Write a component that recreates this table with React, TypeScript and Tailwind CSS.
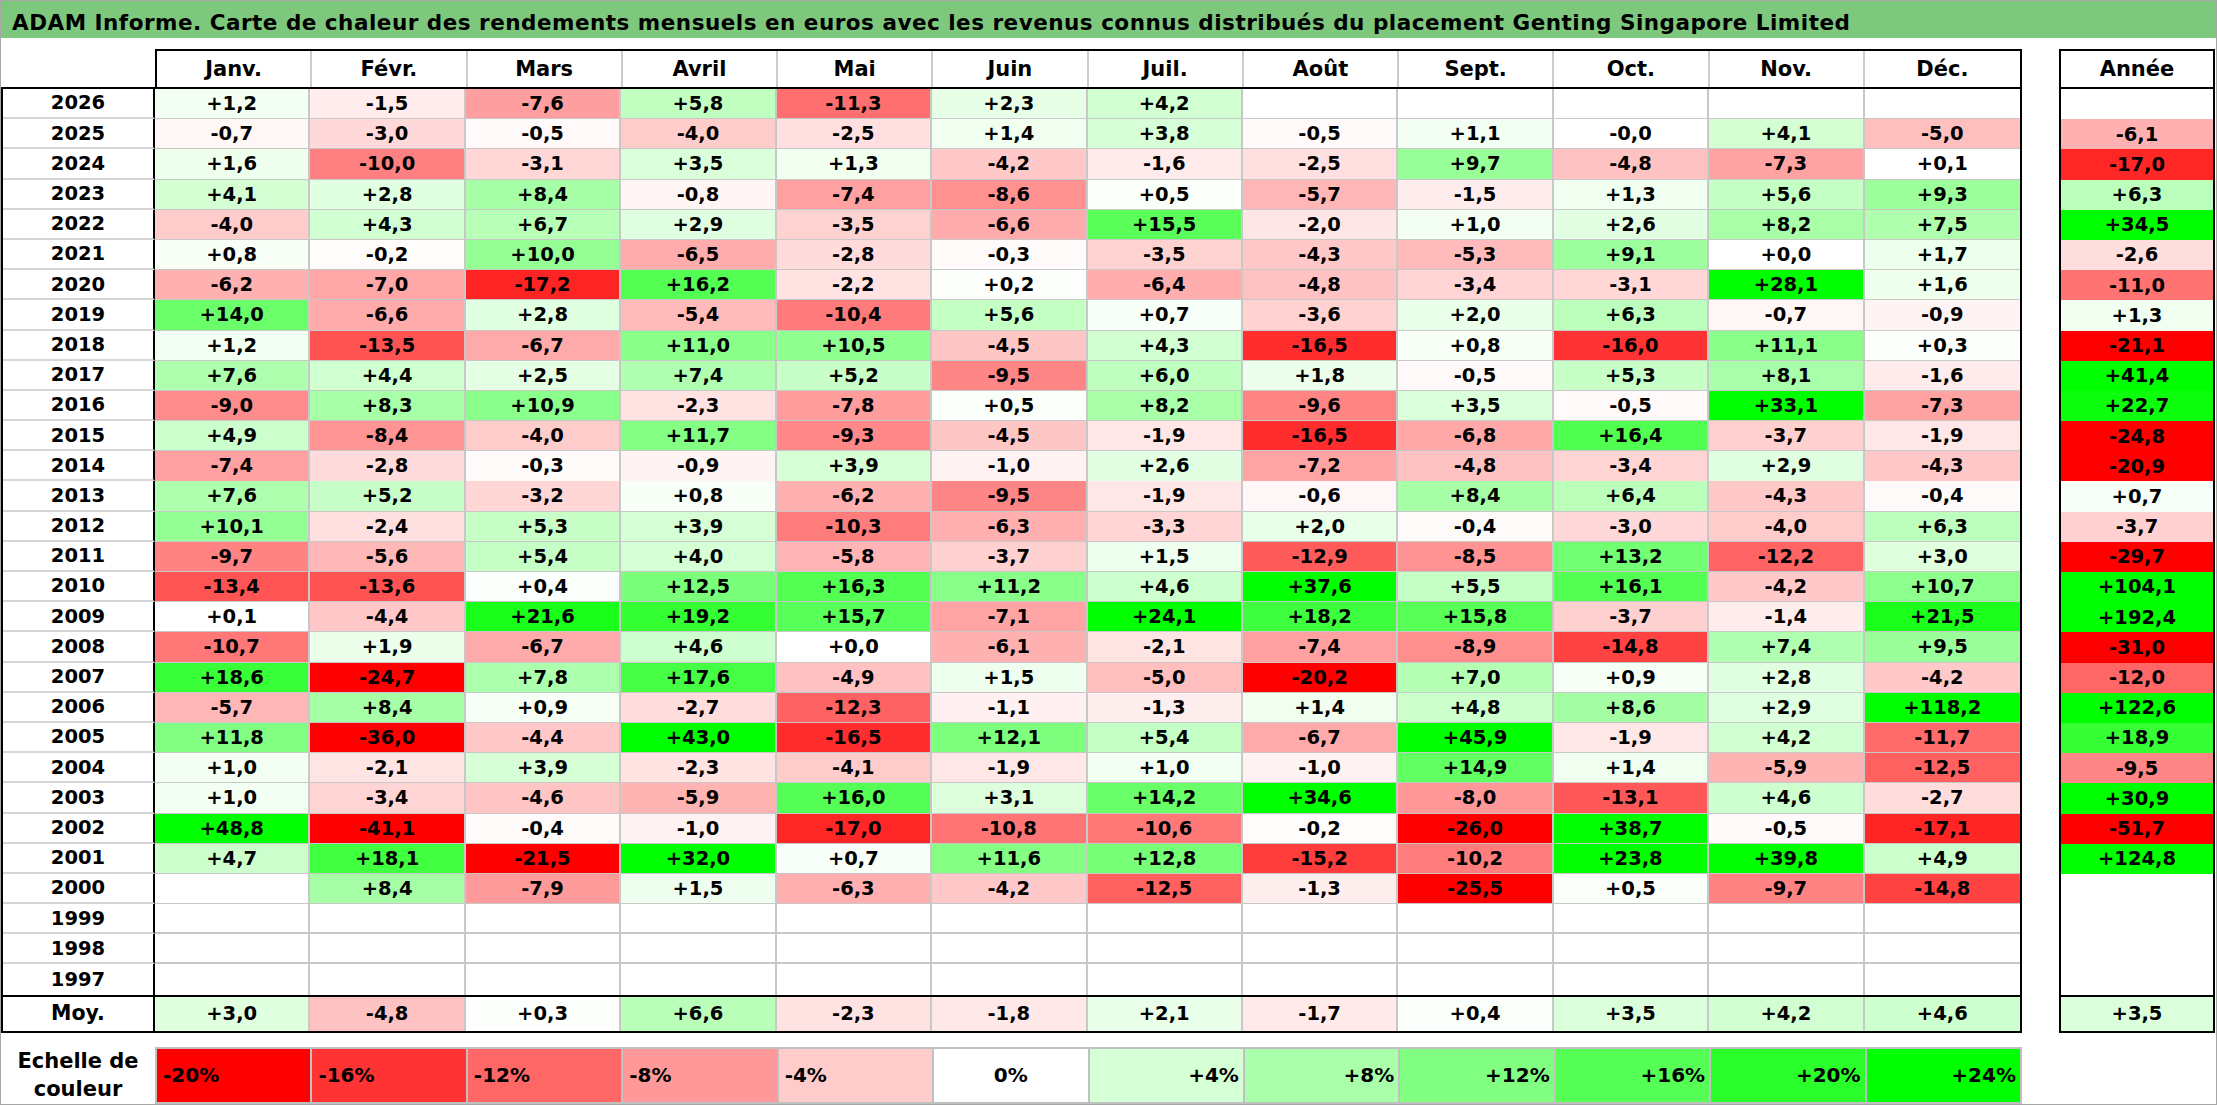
import React from "react";

const months = ["Janv.", "Févr.", "Mars", "Avril", "Mai", "Juin", "Juil.", "Août", "Sept.", "Oct.", "Nov.", "Déc."];

const raw: [string, string, string][] = [
  ["2026", "+1,2 -1,5 -7,6 +5,8 -11,3 +2,3 +4,2 . . . . .", ""],
  ["2025", "-0,7 -3,0 -0,5 -4,0 -2,5 +1,4 +3,8 -0,5 +1,1 -0,0 +4,1 -5,0", "-6,1"],
  ["2024", "+1,6 -10,0 -3,1 +3,5 +1,3 -4,2 -1,6 -2,5 +9,7 -4,8 -7,3 +0,1", "-17,0"],
  ["2023", "+4,1 +2,8 +8,4 -0,8 -7,4 -8,6 +0,5 -5,7 -1,5 +1,3 +5,6 +9,3", "+6,3"],
  ["2022", "-4,0 +4,3 +6,7 +2,9 -3,5 -6,6 +15,5 -2,0 +1,0 +2,6 +8,2 +7,5", "+34,5"],
  ["2021", "+0,8 -0,2 +10,0 -6,5 -2,8 -0,3 -3,5 -4,3 -5,3 +9,1 +0,0 +1,7", "-2,6"],
  ["2020", "-6,2 -7,0 -17,2 +16,2 -2,2 +0,2 -6,4 -4,8 -3,4 -3,1 +28,1 +1,6", "-11,0"],
  ["2019", "+14,0 -6,6 +2,8 -5,4 -10,4 +5,6 +0,7 -3,6 +2,0 +6,3 -0,7 -0,9", "+1,3"],
  ["2018", "+1,2 -13,5 -6,7 +11,0 +10,5 -4,5 +4,3 -16,5 +0,8 -16,0 +11,1 +0,3", "-21,1"],
  ["2017", "+7,6 +4,4 +2,5 +7,4 +5,2 -9,5 +6,0 +1,8 -0,5 +5,3 +8,1 -1,6", "+41,4"],
  ["2016", "-9,0 +8,3 +10,9 -2,3 -7,8 +0,5 +8,2 -9,6 +3,5 -0,5 +33,1 -7,3", "+22,7"],
  ["2015", "+4,9 -8,4 -4,0 +11,7 -9,3 -4,5 -1,9 -16,5 -6,8 +16,4 -3,7 -1,9", "-24,8"],
  ["2014", "-7,4 -2,8 -0,3 -0,9 +3,9 -1,0 +2,6 -7,2 -4,8 -3,4 +2,9 -4,3", "-20,9"],
  ["2013", "+7,6 +5,2 -3,2 +0,8 -6,2 -9,5 -1,9 -0,6 +8,4 +6,4 -4,3 -0,4", "+0,7"],
  ["2012", "+10,1 -2,4 +5,3 +3,9 -10,3 -6,3 -3,3 +2,0 -0,4 -3,0 -4,0 +6,3", "-3,7"],
  ["2011", "-9,7 -5,6 +5,4 +4,0 -5,8 -3,7 +1,5 -12,9 -8,5 +13,2 -12,2 +3,0", "-29,7"],
  ["2010", "-13,4 -13,6 +0,4 +12,5 +16,3 +11,2 +4,6 +37,6 +5,5 +16,1 -4,2 +10,7", "+104,1"],
  ["2009", "+0,1 -4,4 +21,6 +19,2 +15,7 -7,1 +24,1 +18,2 +15,8 -3,7 -1,4 +21,5", "+192,4"],
  ["2008", "-10,7 +1,9 -6,7 +4,6 +0,0 -6,1 -2,1 -7,4 -8,9 -14,8 +7,4 +9,5", "-31,0"],
  ["2007", "+18,6 -24,7 +7,8 +17,6 -4,9 +1,5 -5,0 -20,2 +7,0 +0,9 +2,8 -4,2", "-12,0"],
  ["2006", "-5,7 +8,4 +0,9 -2,7 -12,3 -1,1 -1,3 +1,4 +4,8 +8,6 +2,9 +118,2", "+122,6"],
  ["2005", "+11,8 -36,0 -4,4 +43,0 -16,5 +12,1 +5,4 -6,7 +45,9 -1,9 +4,2 -11,7", "+18,9"],
  ["2004", "+1,0 -2,1 +3,9 -2,3 -4,1 -1,9 +1,0 -1,0 +14,9 +1,4 -5,9 -12,5", "-9,5"],
  ["2003", "+1,0 -3,4 -4,6 -5,9 +16,0 +3,1 +14,2 +34,6 -8,0 -13,1 +4,6 -2,7", "+30,9"],
  ["2002", "+48,8 -41,1 -0,4 -1,0 -17,0 -10,8 -10,6 -0,2 -26,0 +38,7 -0,5 -17,1", "-51,7"],
  ["2001", "+4,7 +18,1 -21,5 +32,0 +0,7 +11,6 +12,8 -15,2 -10,2 +23,8 +39,8 +4,9", "+124,8"],
  ["2000", ". +8,4 -7,9 +1,5 -6,3 -4,2 -12,5 -1,3 -25,5 +0,5 -9,7 -14,8", ""],
  ["1999", ". . . . . . . . . . . .", ""],
  ["1998", ". . . . . . . . . . . .", ""],
  ["1997", ". . . . . . . . . . . .", ""],
];

const rows = raw.map(([year, m, y]) => ({
  year,
  m: m.split(" ").map((s) => (s === "." ? "" : s)),
  y,
}));

const moy = "+3,0 -4,8 +0,3 +6,6 -2,3 -1,8 +2,1 -1,7 +0,4 +3,5 +4,2 +4,6".split(" ");
const moyYear = "+3,5";

const scale = [
  { t: "-20%", c: "#ff0000", a: "justify-start pl-[6px]" },
  { t: "-16%", c: "#ff3333", a: "justify-start pl-[6px]" },
  { t: "-12%", c: "#ff6666", a: "justify-start pl-[6px]" },
  { t: "-8%", c: "#ff9999", a: "justify-start pl-[6px]" },
  { t: "-4%", c: "#ffcccc", a: "justify-start pl-[6px]" },
  { t: "0%", c: "#ffffff", a: "justify-center" },
  { t: "+4%", c: "#d5ffd5", a: "justify-end pr-[4px]" },
  { t: "+8%", c: "#aaffaa", a: "justify-end pr-[4px]" },
  { t: "+12%", c: "#80ff80", a: "justify-end pr-[4px]" },
  { t: "+16%", c: "#55ff55", a: "justify-end pr-[4px]" },
  { t: "+20%", c: "#2bff2b", a: "justify-end pr-[4px]" },
  { t: "+24%", c: "#00ff00", a: "justify-end pr-[4px]" },
];

function bg(s: string): string {
  if (!s) return "#ffffff";
  const v = parseFloat(s.replace(",", "."));
  if (v < 0) {
    const t = Math.min(1, -v / 20);
    const c = Math.round(255 * (1 - t));
    return `rgb(255,${c},${c})`;
  }
  if (v > 0) {
    const t = Math.min(1, v / 24);
    const c = Math.round(255 * (1 - t));
    return `rgb(${c},255,${c})`;
  }
  return "#ffffff";
}

export default function App() {
  const last = rows.length - 1;
  return (
    <div className="w-[2217px] h-[1105px] border border-[#a6a6a6] bg-white text-black font-bold font-['DejaVu_Sans',sans-serif] overflow-hidden">
      <div className="h-[37px] bg-[#7ec87e] flex items-center pl-[11px] pt-[6px] text-[21.5px] tracking-[0.5px] leading-none whitespace-nowrap">
        ADAM Informe. Carte de chaleur des rendements mensuels en euros avec les revenus connus distribués du placement Genting Singapore Limited
      </div>

      <div className="mt-[11px] flex">
        <div className="w-[2021px] shrink-0">
          <div className="flex h-[38px]">
            <div className="w-[154px] shrink-0" />
            <div className="flex-1 grid grid-cols-12 border-2 border-b-0 border-black">
              {months.map((m, i) => (
                <div
                  key={m}
                  className={`flex items-center justify-center pt-[2px] text-[21px] ${i < 11 ? "border-r-2 border-r-[#cccccc]" : ""}`}
                >
                  {m}
                </div>
              ))}
            </div>
          </div>

          <div className="border-2 border-black">
            {rows.map((r, ri) => (
              <div key={r.year} className="flex h-[30.2px]">
                <div
                  className={`w-[152px] shrink-0 border-r-2 border-r-black flex items-center justify-center text-[19.5px] ${ri < last ? "border-b-2 border-b-[#d6d6d6]" : ""}`}
                >
                  {r.year}
                </div>
                <div className="flex-1 grid grid-cols-12">
                  {r.m.map((v, i) => (
                    <div
                      key={i}
                      style={{ backgroundColor: bg(v) }}
                      className={`flex items-center justify-center text-[19.5px] border-[#c8c8c8] ${i < 11 ? "border-r-2" : ""} ${ri < last ? "border-b-2" : ""}`}
                    >
                      {v}
                    </div>
                  ))}
                </div>
              </div>
            ))}
            <div className="flex h-[36px] border-t-2 border-black">
              <div className="w-[152px] shrink-0 border-r-2 border-r-black flex items-center justify-center text-[20.5px]">
                Moy.
              </div>
              <div className="flex-1 grid grid-cols-12">
                {moy.map((v, i) => (
                  <div
                    key={i}
                    style={{ backgroundColor: bg(v) }}
                    className={`flex items-center justify-center text-[19.5px] border-[#c8c8c8] ${i < 11 ? "border-r-2" : ""}`}
                  >
                    {v}
                  </div>
                ))}
              </div>
            </div>
          </div>
        </div>

        <div className="ml-[37px] w-[156px] shrink-0">
          <div className="h-[38px] border-2 border-b-0 border-black flex items-center justify-center pt-[2px] text-[21px]">
            Année
          </div>
          <div className="border-2 border-black">
            {rows.map((r) => (
              <div
                key={r.year}
                style={{ backgroundColor: bg(r.y) }}
                className="h-[30.2px] flex items-center justify-center text-[19.5px]"
              >
                {r.y}
              </div>
            ))}
            <div
              style={{ backgroundColor: bg(moyYear) }}
              className="h-[36px] border-t-2 border-black flex items-center justify-center text-[19.5px]"
            >
              {moyYear}
            </div>
          </div>
        </div>
      </div>

      <div className="mt-[14px] flex w-[2021px] h-[57px]">
        <div className="w-[154px] shrink-0 flex flex-col items-center justify-center text-[21px] leading-[28px]">
          <span>Echelle de</span>
          <span>couleur</span>
        </div>
        <div className="flex-1 grid grid-cols-12 border-2 border-r-0 border-[#c0c0c0]">
          {scale.map((s) => (
            <div
              key={s.t}
              style={{ backgroundColor: s.c }}
              className={`flex items-center text-[20px] border-r-2 border-r-[#c0c0c0] ${s.a}`}
            >
              {s.t}
            </div>
          ))}
        </div>
      </div>
    </div>
  );
}
